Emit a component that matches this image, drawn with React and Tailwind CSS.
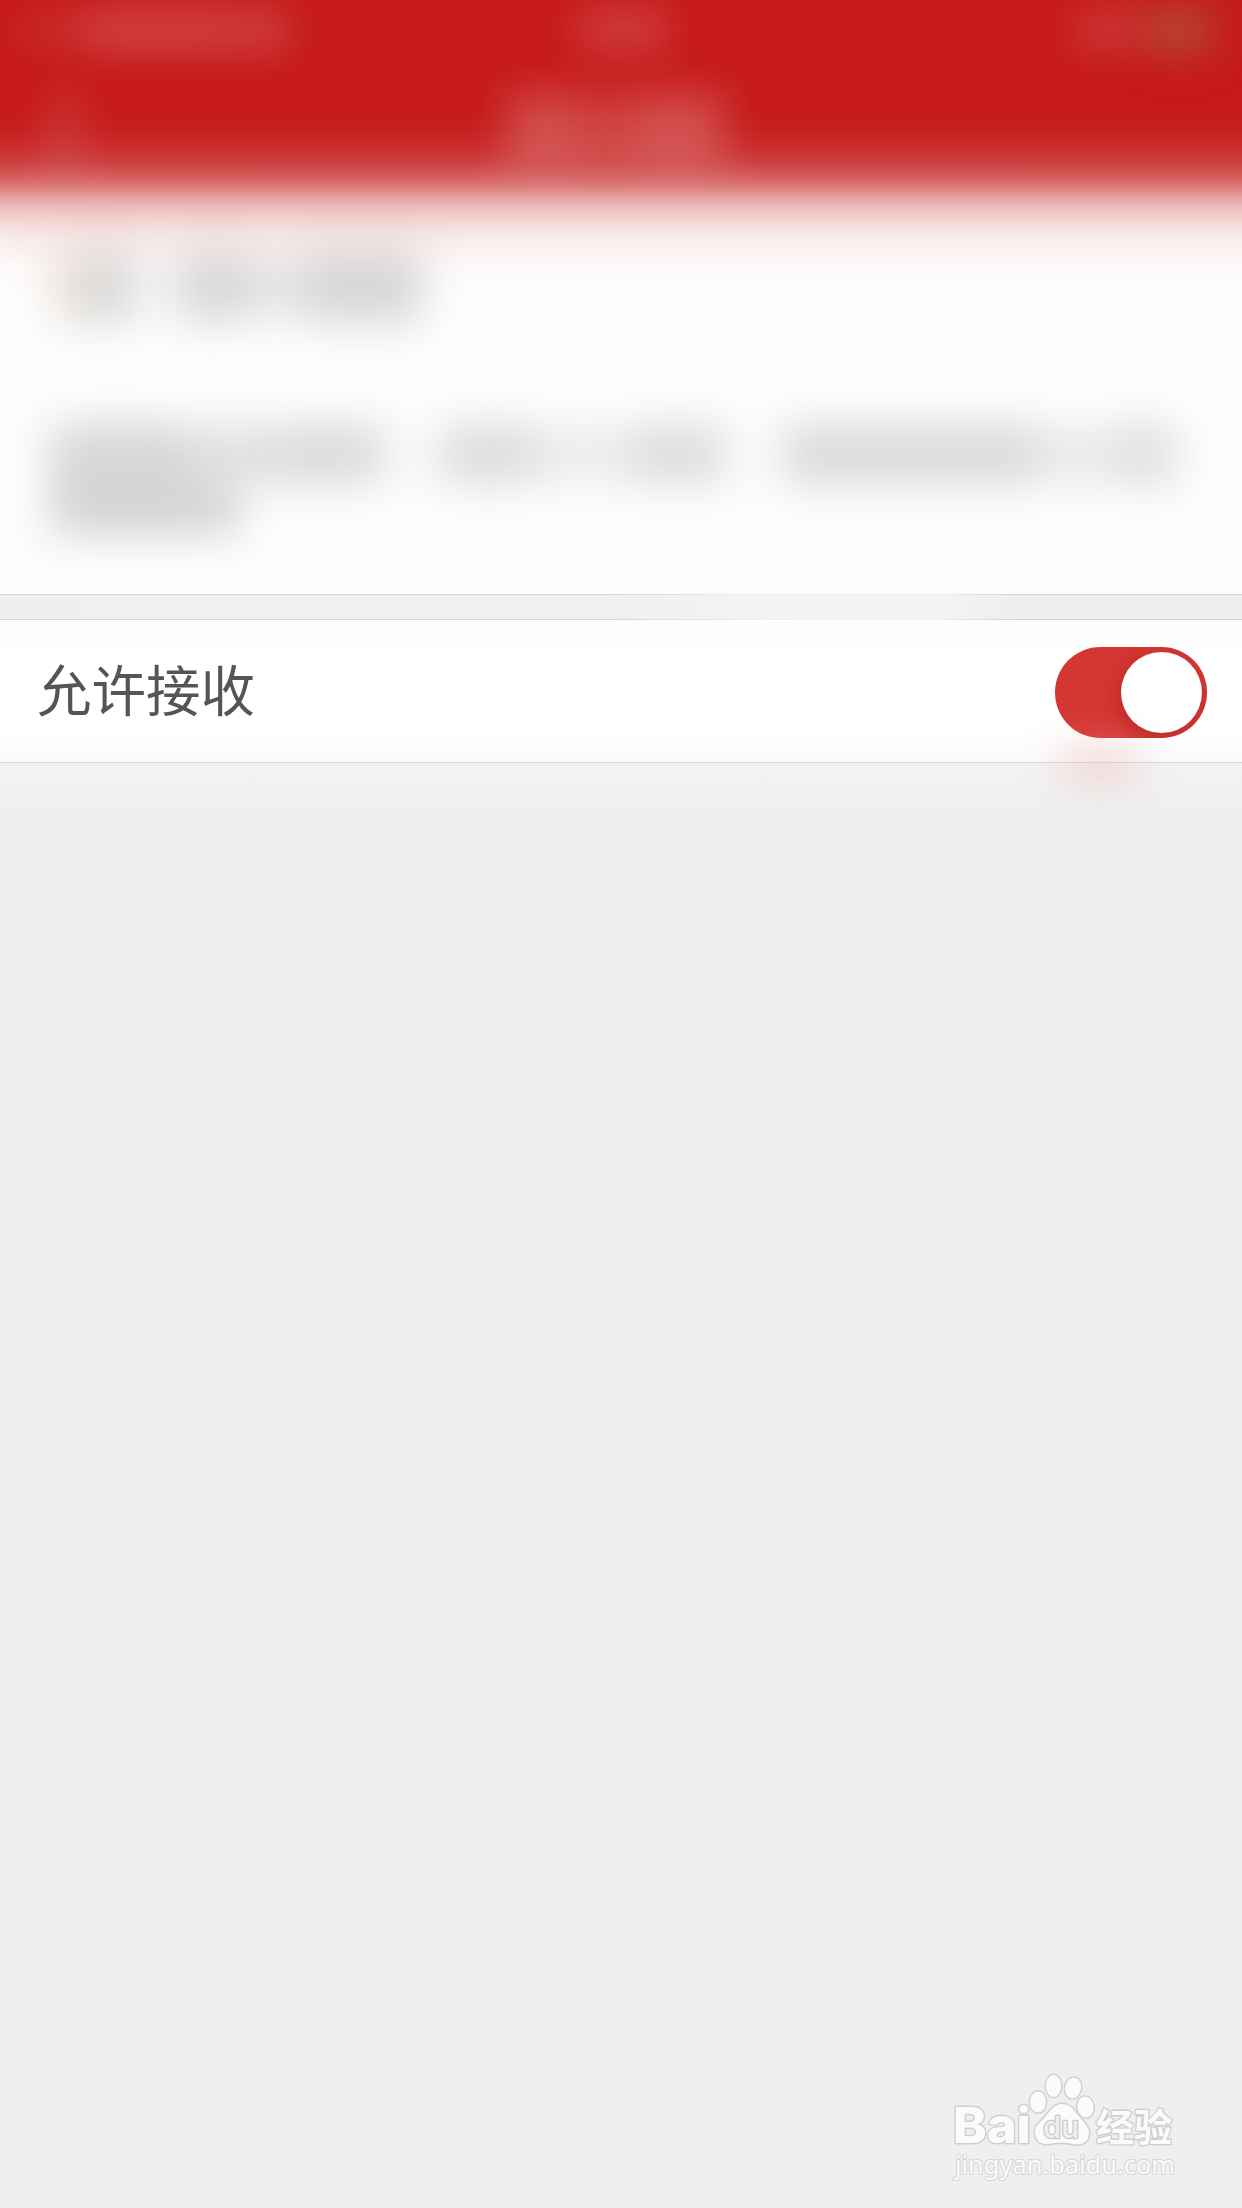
import React, { useState } from 'react';
import clsx from 'clsx';

const CJK = "font-['Liberation_Sans','Noto_Sans_CJK_SC',sans-serif]";

// Soft placeholder for a piece of hidden content, blurred by its row
function Smudge({ className }) {
  return <div className={clsx('shrink-0', className)} />;
}

function StatusBar() {
  return (
    <div className="flex h-[60px] items-center blur-[20px]">
      <Smudge className="ml-[18px] h-[30px] w-[66px] bg-white/10" />
      <Smudge className="h-[40px] w-[140px] bg-white/20" />
      <Smudge className="h-[46px] w-[66px] bg-white/16" />
      <Smudge className="ml-[286px] h-[44px] w-[94px] bg-white/16" />
      <Smudge className="ml-[402px] h-[36px] w-[66px] bg-white/15" />
      <Smudge className="ml-[8px] h-[44px] w-[66px] bg-[#a86d4b]/60" />
    </div>
  );
}

function NavBar() {
  return (
    <div className="flex h-[138px] items-center blur-[22px]">
      <Smudge className="ml-[48px] h-[80px] w-[34px] bg-white/12" />
      <Smudge className="ml-[425px] h-[72px] w-[66px] bg-white/23" />
      <Smudge className="h-[70px] w-[62px] bg-white/17" />
      <Smudge className="h-[72px] w-[90px] bg-white/23" />
    </div>
  );
}

function AccountInfo() {
  return (
    <div className="pt-[55px]">
      <div className="flex h-[70px] items-center blur-[23px]">
        <Smudge className="ml-[52px] h-[68px] w-[32px] bg-[#7c4a10]/17" />
        <Smudge className="h-[72px] w-[50px] bg-[#0a100a]/16" />
        <Smudge className="h-[40px] w-[46px] bg-black/4" />
        <Smudge className="h-[68px] w-[66px] bg-black/16" />
        <Smudge className="h-[54px] w-[60px] bg-black/11" />
        <Smudge className="h-[70px] w-[116px] bg-black/16" />
      </div>
      <div className="mt-[104px] flex h-[54px] items-center blur-[23px]">
        <Smudge className="ml-[50px] h-[60px] w-[134px] bg-black/16" />
        <Smudge className="h-[52px] w-[90px] bg-black/13" />
        <Smudge className="h-[56px] w-[112px] bg-black/15" />
        <Smudge className="ml-[52px] h-[56px] w-[98px] bg-black/14" />
        <Smudge className="h-[50px] w-[96px] bg-black/8" />
        <Smudge className="h-[56px] w-[94px] bg-black/14" />
        <Smudge className="ml-[56px] h-[58px] w-[254px] bg-black/15" />
        <Smudge className="h-[50px] w-[82px] bg-black/9" />
        <Smudge className="h-[60px] w-[58px] bg-black/13" />
      </div>
      <div className="flex h-[56px] items-center blur-[22px]">
        <Smudge className="ml-[50px] h-[50px] w-[190px] bg-black/17" />
      </div>
    </div>
  );
}

function Switch({ checked, onChange }) {
  return (
    <button
      type="button"
      role="switch"
      aria-checked={checked}
      onClick={() => onChange(!checked)}
      className={clsx(
        'flex h-[91px] w-[152px] items-center overflow-hidden rounded-full px-[5px]',
        checked ? 'justify-end bg-[#d53632]' : 'justify-start bg-[#d8d8d8]'
      )}
    >
      <span className="size-[81px] rounded-full bg-white shadow-[-3px_5px_18px_rgba(120,20,20,0.3)]" />
    </button>
  );
}

function Watermark() {
  return (
    <svg
      className="absolute right-[60px] bottom-[20px] h-[120px] w-[240px]"
      viewBox="0 0 240 120"
      fill="#fbfbfb"
      stroke="#cfcfcf"
      strokeWidth="2.8"
      strokeLinejoin="round"
      paintOrder="stroke"
    >
      <text x="11" y="75" fontSize="49" fontWeight="800" textLength="78" lengthAdjust="spacingAndGlyphs" fontFamily="Inter, sans-serif">
        Bai
      </text>
      <ellipse cx="96" cy="34" rx="8" ry="10.5" />
      <ellipse cx="111.5" cy="18" rx="7.7" ry="11" />
      <ellipse cx="131" cy="20" rx="8" ry="10.5" transform="rotate(12 131 20)" />
      <ellipse cx="143.5" cy="39" rx="8.2" ry="10.5" transform="rotate(-8 143.5 39)" />
      <path d="M120 36 C112 36 108 43 103 49 C97 55 92 59 93 66 C94 74 100 77 108 76 C116 74 125 75 131 76 C140 78 146 74 147 66 C148 58 140 53 135 46 C131 40 127 36 120 36 Z" />
      <text x="101" y="70" fontSize="30" textLength="36" lengthAdjust="spacingAndGlyphs" fill="#efefef" stroke="#c8c8c8" strokeWidth="2.6" fontWeight="500" fontFamily="Inter, sans-serif">
        du
      </text>
      <text x="154" y="73" fontSize="38" fontWeight="700" textLength="76" lengthAdjust="spacingAndGlyphs" fontFamily="Noto Sans CJK SC, sans-serif">
        经验
      </text>
      <text x="13" y="106" fontSize="26" textLength="220" lengthAdjust="spacingAndGlyphs" strokeWidth="2.2" stroke="#d6d6d6" fontFamily="Noto Sans, sans-serif">
        jingyan.baidu.com
      </text>
    </svg>
  );
}

export default function App() {
  const [allowed, setAllowed] = useState(true);

  return (
    <div className={clsx('relative h-[2208px] w-[1242px] overflow-hidden bg-[#efefef]', CJK)}>
      <div className="h-[594px] overflow-hidden bg-[linear-gradient(to_bottom,#c61919_0px,#c61a19_110px,#c6201f_130px,#ca2d2d_148px,#cd4040_163px,#d55c5d_176px,#dc7a79_187px,#e5a09f_197px,#edbebe_208px,#f2d3d1_219px,#f6e4e4_231px,#faeeee_243px,#fdf9f9_265px,#fefefe_300px,#fdfdfd_594px)]">
        <StatusBar />
        <NavBar />
        <AccountInfo />
      </div>

      {/* Divider strip, brighter around the middle */}
      <div className="h-[26px] bg-[linear-gradient(to_right,#d4d4d4_0px,#d4d4d4_600px,#ececec_740px,#f2f2f2_930px,#d0d0d0_1020px)] py-px">
        <div className="h-full bg-[linear-gradient(to_right,#efefef_0px,#f0f0f0_620px,#f4f4f4_800px,#f4f4f4_930px,#eeeeee_1020px)]" />
      </div>

      <div className="flex h-[142px] items-center justify-between bg-[linear-gradient(to_bottom,#fdfdfd,#ffffff_30%,#ffffff_75%,#fafafa)] pt-[2px] pr-[35px] pl-[37px]">
        <span className="pt-[2px] text-[54.5px] leading-none text-[#555555]">允许接收</span>
        <Switch checked={allowed} onChange={setAllowed} />
      </div>

      <div className="border-t border-[#d8d8d8] bg-[linear-gradient(to_bottom,#f3f3f3,#efefef_50px)] pb-[60px]">
        {/* Red glow under the switch */}
        <Smudge className="-mt-[16px] ml-[1062px] h-[32px] w-[76px] bg-[#f0a8a8]/45 blur-[20px]" />
      </div>

      <Watermark />
    </div>
  );
}
